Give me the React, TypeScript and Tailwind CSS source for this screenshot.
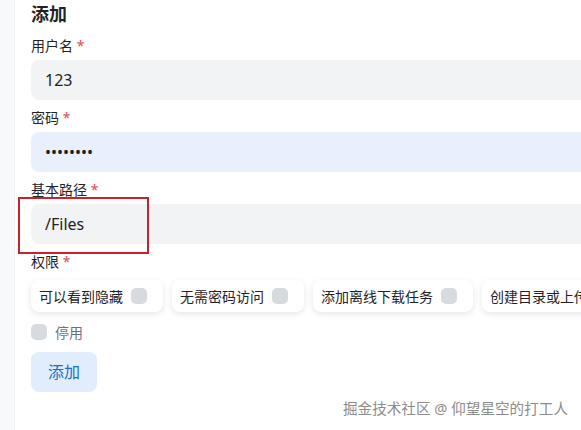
import type { ReactNode } from "react"

const perms = ["可以看到隐藏", "无需密码访问", "添加离线下载任务", "创建目录或上传"]

function Label({ children }: { children: ReactNode }) {
  return (
    <div className="h-5 text-[14px] leading-5 text-[#1f2328]">
      {children} <span className="text-[#e5484d]">*</span>
    </div>
  )
}

function Field({ label, value, autofill }: { label: string; value: string; autofill?: boolean }) {
  return (
    <div className="flex flex-col gap-1">
      <Label>{label}</Label>
      <div
        className={`h-10 rounded-lg flex items-center px-3.5 text-[16px] text-[#1f2328] ${
          autofill ? "bg-[#e8f0fe]" : "bg-[#f1f3f5]"
        }`}
      >
        {value}
      </div>
    </div>
  )
}

function Box() {
  return <span className="w-4 h-4 rounded-[5px] bg-[#d7dade] flex-shrink-0" />
}

export default function App() {
  return (
    <div
      className="relative w-[581px] h-[430px] overflow-hidden bg-white flex"
      style={{ fontFamily: '"Noto Sans", "Noto Sans CJK SC", sans-serif' }}
    >
      {/* sidebar edge */}
      <div className="w-[15px] flex-shrink-0 bg-[#f8f9fa] border-r border-[#eef0f2]" />

      <div className="flex-shrink-0 w-[720px] pl-4">
        <h2 className="text-[18px] leading-7 font-bold text-[#1f2328]">添加</h2>

        <div className="mt-2 flex flex-col gap-2">
          <Field label="用户名" value="123" />
          <Field label="密码" value="••••••••" autofill />
          <Field label="基本路径" value="/Files" />
          <Label>权限</Label>
        </div>

        <div className="mt-2 flex gap-[9px]">
          {perms.map((p) => (
            <div
              key={p}
              className="h-8 flex items-center gap-2 pl-2 pr-4 rounded-lg bg-white shadow-[0_2px_6px_rgba(0,0,0,0.1)] text-[14px] text-[#1f2328] whitespace-nowrap"
            >
              {p}
              <Box />
            </div>
          ))}
        </div>

        <div className="mt-2.5 h-5 flex items-center gap-2 text-[14px] text-[#6b7280]">
          <Box />
          停用
        </div>

        <button className="mt-[10px] h-10 px-[17px] rounded-lg bg-[#e1edfc] text-[16px] text-[#1a6dcc]">
          添加
        </button>
      </div>

      {/* highlight box */}
      <div className="absolute left-[18px] top-[197px] w-[131px] h-[57px] border-2 border-[#c8232c]" />

      {/* watermark */}
      <div className="absolute right-[13px] bottom-[12px] text-[14.6px] leading-5 text-[#8c8c8c] [text-shadow:0_0_2px_#fff]">
        掘金技术社区 @ 仰望星空的打工人
      </div>
    </div>
  )
}
